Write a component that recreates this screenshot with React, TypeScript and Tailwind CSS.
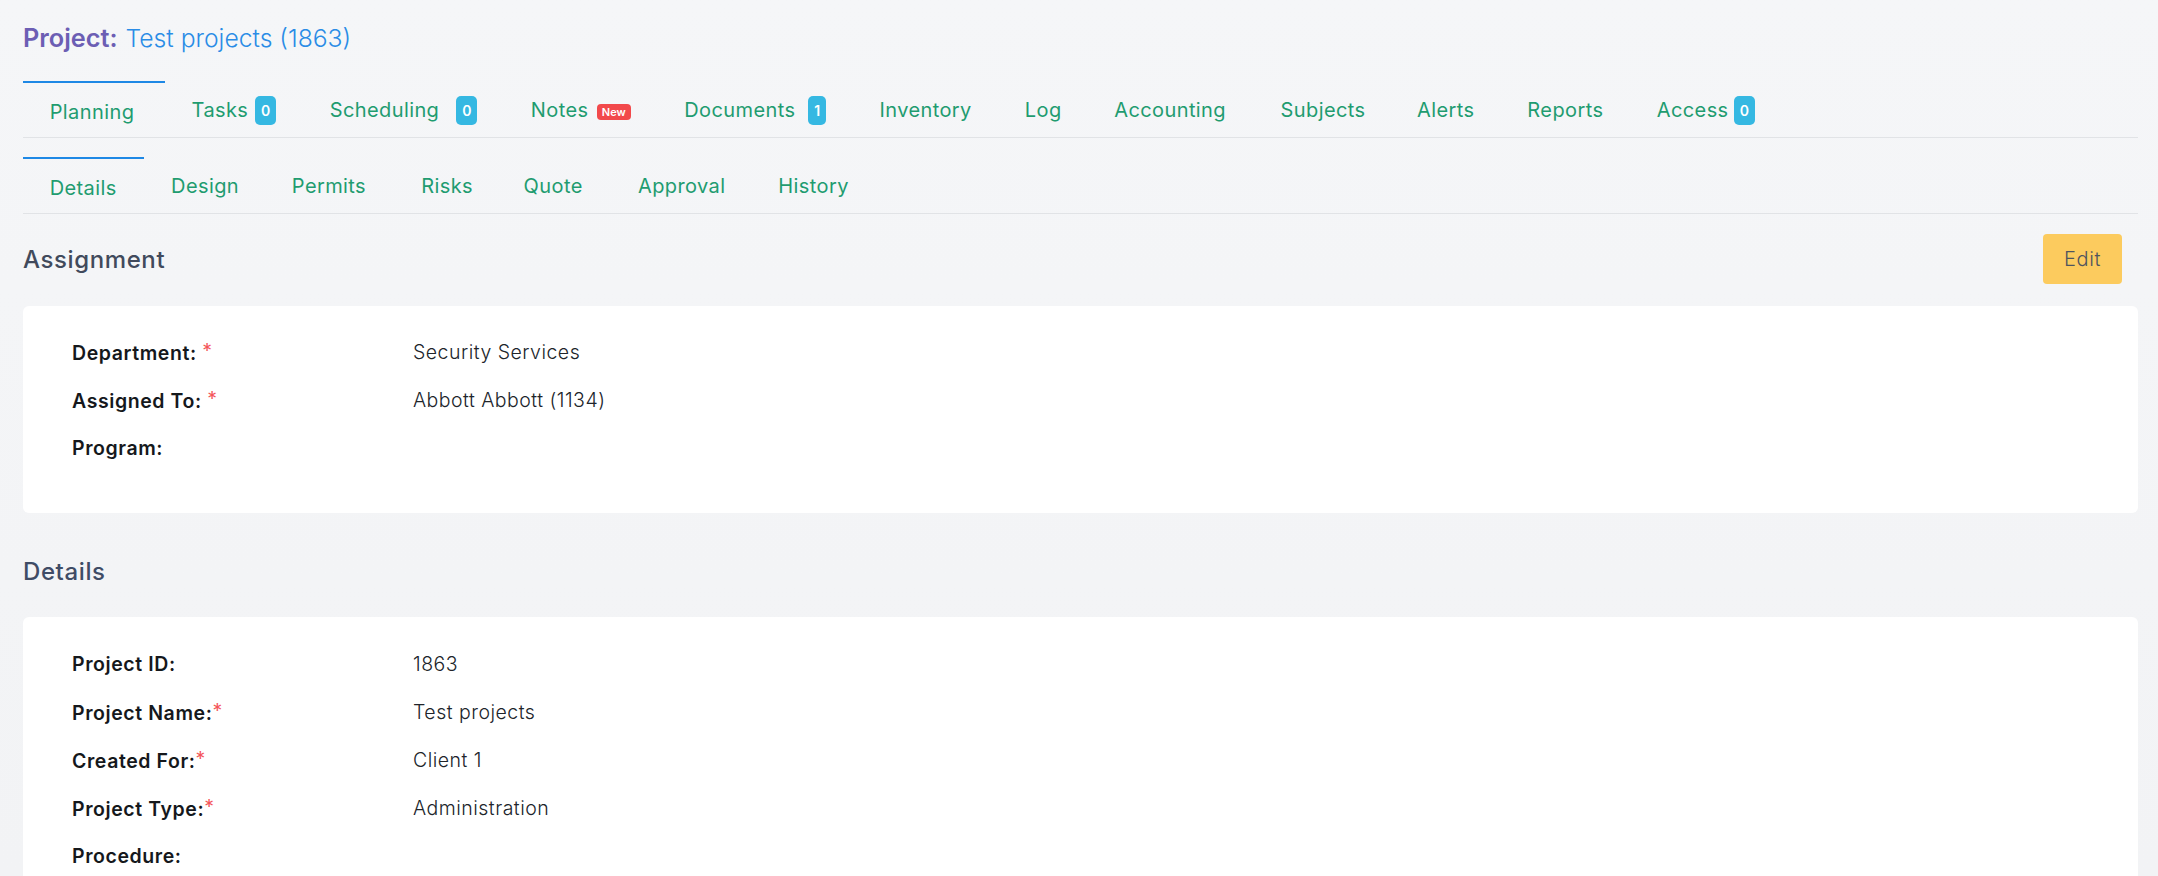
const fontStack = "font-['Inter','Noto_Sans',sans-serif]";

type TabItem = {
  label: string;
  width: string;
  count?: string;
  isNew?: boolean;
  wide?: boolean;
  active?: boolean;
};

const mainTabs: TabItem[] = [
  { label: "Planning", width: "w-[88.5px]", active: true },
  { label: "Tasks", width: "w-[53.5px]", count: "0" },
  { label: "Scheduling", width: "w-[110.5px]", count: "0", wide: true },
  { label: "Notes", width: "w-[56px]", isNew: true },
  { label: "Documents", width: "w-[114px]", count: "1" },
  { label: "Inventory", width: "w-[92px]" },
  { label: "Log", width: "w-[36px]" },
  { label: "Accounting", width: "w-[113px]" },
  { label: "Subjects", width: "w-[83px]" },
  { label: "Alerts", width: "w-[57px]" },
  { label: "Reports", width: "w-[76px]" },
  { label: "Access", width: "w-[67px]", count: "0" },
];

const subTabs: TabItem[] = [
  { label: "Details", width: "w-[68px]", active: true },
  { label: "Design", width: "w-[67.4px]" },
  { label: "Permits", width: "w-[76px]" },
  { label: "Risks", width: "w-[49px]" },
  { label: "Quote", width: "w-[61px]" },
  { label: "Approval", width: "w-[87px]" },
  { label: "History", width: "w-[70px]" },
];

function Tab({ label, width, count, isNew, wide, active }: TabItem) {
  return (
    <div
      className={
        "flex items-start px-[26.7px] pt-[15px] text-[20px] leading-[28px] tracking-[0.02em] text-[#1f9c70]" +
        (active ? " border-t-2 border-[#1e88e5]" : " border-t-0")
      }
    >
      <span className={"whitespace-nowrap " + width}>{label}</span>
      {count && (
        <span
          className={
            "flex h-[29px] min-w-[17px] items-center justify-center rounded-[5px] bg-[#35b8e2] px-[6px] text-[14px] font-semibold leading-none tracking-normal text-white " +
            (wide ? "ml-[16px]" : "ml-[10px]")
          }
        >
          {count}
        </span>
      )}
      {isNew && (
        <span className="ml-[10px] mt-[8px] flex h-[16px] w-[34px] items-center justify-center rounded-[4px] bg-[#f2494b] text-[11px] font-semibold leading-none tracking-normal text-white">
          New
        </span>
      )}
    </div>
  );
}

function TabBar({ tabs }: { tabs: TabItem[] }) {
  return (
    <div className="flex h-[57px] items-start border-b border-[#e1e3e6]">
      {tabs.map((t) => (
        <Tab key={t.label} {...t} />
      ))}
    </div>
  );
}

function Row({ label, required, spaced, value }: { label: string; required?: boolean; spaced?: boolean; value?: string }) {
  return (
    <div className="flex h-[48px] items-center text-[19.5px]">
      <div className="w-[341px] font-semibold tracking-[0.03em] text-[#15181c]">
        {label}
        {spaced && " "}
        {required && <span className="align-[2px] font-normal text-[#f4565a]">*</span>}
      </div>
      <div className="font-light tracking-[0.025em] text-[#20242a]">{value}</div>
    </div>
  );
}

export default function App() {
  return (
    <div className={"h-screen overflow-hidden bg-gradient-to-b from-[#f5f6f8] to-[#f2f3f5] pl-[23px] pr-[20px] " + fontStack}>
      <div className="flex h-[81px] items-start pt-[21px] leading-[34px]">
        <span className="text-[25.3px] font-semibold text-[#6c5eb4]">Project:</span>
        <span className="ml-[8px] text-[24.7px] font-light text-[#2a8ce6]">Test projects (1863)</span>
      </div>

      <TabBar tabs={mainTabs} />
      <div className="mt-[19px]">
        <TabBar tabs={subTabs} />
      </div>

      <div className="mt-[20px] flex h-[50px] items-center justify-between">
        <h2 className="pt-[2px] text-[24px] font-medium tracking-[0.025em] text-[#414a5c]">Assignment</h2>
        <button className="mr-[16px] flex h-[50px] w-[79px] items-center justify-center rounded-[4px] bg-[#fccb5e] text-[20px] font-light tracking-[0.03em] text-[#4f545e]">
          Edit
        </button>
      </div>
      <div className="mt-[22px] h-[207px] rounded-[6px] bg-white pl-[49px] pt-[23px]">
        <Row label="Department:" required spaced value="Security Services" />
        <Row label="Assigned To:" required spaced value="Abbott Abbott (1134)" />
        <Row label="Program:" />
      </div>

      <h2 className="mt-[33px] flex h-[50px] items-center pt-[2px] text-[24px] font-medium tracking-[0.025em] text-[#3f4c66]">Details</h2>
      <div className="mt-[21px] rounded-[6px] bg-white pl-[49px] pt-[24px] pb-[40px]">
        <Row label="Project ID:" value="1863" />
        <Row label="Project Name:" required value="Test projects" />
        <Row label="Created For:" required value="Client 1" />
        <Row label="Project Type:" required value="Administration" />
        <Row label="Procedure:" />
      </div>
    </div>
  );
}
